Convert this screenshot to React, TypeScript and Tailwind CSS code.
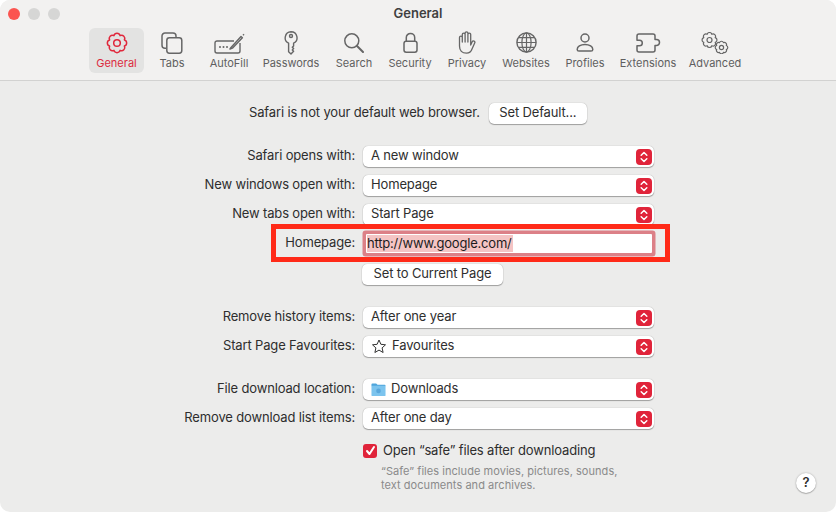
import type { ReactNode } from "react";

// 8 lobed scalloped gear, centred on cx/cy
function gearPath(cx: number, cy: number, r: number) {
  const n = 8;
  let d = "";
  for (let i = 0; i <= n; i++) {
    const a = ((i - 0.5) * 2 * Math.PI) / n - Math.PI / 2;
    const x = (cx + r * Math.cos(a)).toFixed(2);
    const y = (cy + r * Math.sin(a)).toFixed(2);
    d += i === 0 ? `M${x} ${y}` : `A${(r * 0.4).toFixed(2)} ${(r * 0.4).toFixed(2)} 0 0 1 ${x} ${y}`;
  }
  return d + "Z";
}

function GearIcon() {
  return (
    <svg width="22" height="22" viewBox="0 0 22 22" fill="none" stroke="#e0283c" strokeWidth="1.5">
      <path d={gearPath(11, 11, 8)} strokeLinejoin="round" />
      <circle cx="11" cy="11" r="3.300" />
    </svg>
  );
}

function TabsIcon() {
  return (
    <svg width="22" height="22" viewBox="0 0 22 22" fill="none" stroke="#666" strokeWidth="1.5">
      <path d="M5 16.200H4a3 3 0 0 1-3-3V4a3 3 0 0 1 3-3h8a3 3 0 0 1 3 3v1" />
      <rect x="5.800" y="5.800" width="15" height="15.400" rx="2.600" />
    </svg>
  );
}

function AutoFillIcon() {
  return (
    <svg width="31" height="22" viewBox="0 0 31 22" fill="none" stroke="#666" strokeWidth="1.400">
      <path d="M20 9H3a2 2 0 0 0-2 2v8a2 2 0 0 0 2 2h21a2 2 0 0 0 2-2v-8" />
      <path d="M17 15.500 27 4.500l1.400 1.300-10 10.400-2.400.8z" strokeLinejoin="round" />
      <path d="M29 3.200l1-1" />
      <circle cx="6" cy="15" r="1" fill="#666" stroke="none" />
      <circle cx="9.500" cy="15" r="1" fill="#666" stroke="none" />
      <circle cx="13" cy="15" r="1" fill="#666" stroke="none" />
    </svg>
  );
}

function KeyIcon() {
  return (
    <svg width="14" height="24" viewBox="0 0 14 24" fill="none" stroke="#666" strokeWidth="1.400">
      <path
        d="M7 .8a6 6 0 0 1 2.600 11.400V15l-1.300 1.300 1.300 1.300-1.300 1.300 1.300 1.300L7 23l-2.400-2.200V12.200A6 6 0 0 1 7 .8z"
        strokeLinejoin="round"
      />
      <circle cx="7" cy="5" r="1.500" />
    </svg>
  );
}

function SearchIcon() {
  return (
    <svg width="20" height="20" viewBox="0 0 20 20" fill="none" stroke="#666" strokeWidth="1.500">
      <circle cx="7.800" cy="7.800" r="7" />
      <path d="M12.800 12.800 19 19" strokeWidth="2" strokeLinecap="round" />
    </svg>
  );
}

function LockIcon() {
  return (
    <svg width="15" height="21" viewBox="0 0 15 21" fill="none" stroke="#666" strokeWidth="1.500">
      <rect x="1" y="9.200" width="13" height="11" rx="2.200" />
      <path d="M3.300 9V5.600a4.200 4.200 0 0 1 8.400 0V9" />
    </svg>
  );
}

function HandIcon() {
  return (
    <svg width="18" height="23" viewBox="0 0 18 23" fill="none" stroke="#666" strokeWidth="1.300" strokeLinecap="round" strokeLinejoin="round">
      <path d="M4.300 11V3.500a1.400 1.400 0 0 1 2.800 0V11M7.100 11V2.200a1.400 1.400 0 0 1 2.800 0V11M9.900 11V3.500a1.400 1.400 0 0 1 2.800 0V14l1.500-3.300a1.400 1.400 0 0 1 2.500 1.300L14 18c-1 3-3 4.200-5.500 4.200-4.500 0-7-2.700-7-7.200V6.500a1.400 1.400 0 0 1 2.800 0V11" />
    </svg>
  );
}

function GlobeIcon() {
  return (
    <svg width="21" height="21" viewBox="0 0 21 21" fill="none" stroke="#666" strokeWidth="1.200">
      <circle cx="10.500" cy="10.500" r="9.600" strokeWidth="1.400" />
      <ellipse cx="10.500" cy="10.500" rx="4.600" ry="9.600" />
      <path d="M10.500 1v19M1 10.500h19M2.400 5.600h16.200M2.400 15.400h16.200" />
    </svg>
  );
}

function ProfileIcon() {
  return (
    <svg width="18" height="19" viewBox="0 0 18 19" fill="none" stroke="#666" strokeWidth="1.500">
      <circle cx="9" cy="5" r="4" />
      <path d="M9 11.400c-4.600 0-7.800 2.400-7.800 5 0 1 .7 1.600 1.800 1.600h12c1.100 0 1.800-.6 1.800-1.600 0-2.600-3.200-5-7.800-5z" />
    </svg>
  );
}

function PuzzleIcon() {
  return (
    <svg width="25" height="20" viewBox="0 0 25 20" fill="none" stroke="#666" strokeWidth="1.500">
      <path
        d="M3 1h14a2 2 0 0 1 2 2v3.500h1.500a3 3 0 0 1 0 6H19V17a2 2 0 0 1-2 2H3a2 2 0 0 1-2-2v-4.200h2.500a2.800 2.800 0 0 0 0-5.600H1V3a2 2 0 0 1 2-2z"
        strokeLinejoin="round"
      />
    </svg>
  );
}

function AdvancedIcon() {
  return (
    <svg width="28" height="22" viewBox="0 0 28 22" fill="none" stroke="#666" strokeWidth="1.200">
      <path d={gearPath(8.500, 8, 6.200)} strokeLinejoin="round" />
      <circle cx="8.500" cy="8" r="2.500" />
      <path d={gearPath(20.500, 15.500, 5.200)} strokeLinejoin="round" />
      <circle cx="20.500" cy="15.500" r="2.100" />
    </svg>
  );
}

type Tab = { label: string; icon: ReactNode; width: string; active?: boolean };

const tabs: Tab[] = [
  { label: "General", icon: <GearIcon />, width: "w-[55px]", active: true },
  { label: "Tabs", icon: <TabsIcon />, width: "w-[56px]" },
  { label: "AutoFill", icon: <AutoFillIcon />, width: "w-[58px]" },
  { label: "Passwords", icon: <KeyIcon />, width: "w-[66px]" },
  { label: "Search", icon: <SearchIcon />, width: "w-[60px]" },
  { label: "Security", icon: <LockIcon />, width: "w-[52px]" },
  { label: "Privacy", icon: <HandIcon />, width: "w-[62px]" },
  { label: "Websites", icon: <GlobeIcon />, width: "w-[56px]" },
  { label: "Profiles", icon: <ProfileIcon />, width: "w-[62px]" },
  { label: "Extensions", icon: <PuzzleIcon />, width: "w-[64px]" },
  { label: "Advanced", icon: <AdvancedIcon />, width: "w-[70px]" },
];

function Stepper() {
  return (
    <span className="flex h-4 w-4 items-center justify-center rounded-[4px] bg-[#e0243a]">
      <svg width="10" height="12" viewBox="0 0 10 12" fill="none" stroke="#fff" strokeWidth="1.500" strokeLinecap="round" strokeLinejoin="round">
        <path d="M2.200 4.200 5 1.500l2.800 2.700M2.200 7.800 5 10.500l2.800-2.700" />
      </svg>
    </span>
  );
}

function Row({ label, children }: { label?: string; children: ReactNode }) {
  return (
    <div className="flex h-[21px] items-center">
      <span className="w-[355px] whitespace-nowrap pb-[2px] text-right">{label}</span>
      <div className="ml-2 w-[291px]">{children}</div>
    </div>
  );
}

function Select({ value, icon }: { value: string; icon?: ReactNode }) {
  return (
    <div className="flex h-[21px] items-center justify-between rounded-[5px] bg-white pl-2 pr-[2px] shadow-[0_0_1px_rgba(0,0,0,0.35),0_1px_1px_rgba(0,0,0,0.3)]">
      <span className="flex items-center gap-[5px]">
        {icon}
        <span className="pb-[2px]">{value}</span>
      </span>
      <Stepper />
    </div>
  );
}

function Star() {
  return (
    <svg width="16" height="15" viewBox="0 0 15 15" fill="none" stroke="#333" strokeWidth="1" strokeLinejoin="round">
      <path d="M7.500 1l1.900 4.300 4.600.5-3.400 3.100 1 4.600-4.100-2.400-4.100 2.400 1-4.600L1 5.800l4.600-.5z" />
    </svg>
  );
}

function Folder() {
  return (
    <svg width="15" height="15" viewBox="0 0 16 15">
      <path d="M0.500 2a1 1 0 0 1 1-1h4l1.500 1.500h7.500a1 1 0 0 1 1 1V4H.5z" fill="#4fa6dc" />
      <rect x="0.500" y="3.500" width="15" height="11" rx="1" fill="#7cc4ee" />
      <circle cx="8" cy="9" r="2.500" fill="#5aa8dc" />
    </svg>
  );
}

function PushButton({ children, className }: { children: ReactNode; className: string }) {
  return (
    <button
      type="button"
      className={`flex h-[21px] items-center justify-center rounded-[5px] bg-white pb-[2px] shadow-[0_0_1px_rgba(0,0,0,0.35),0_1px_1px_rgba(0,0,0,0.3)] ${className}`}
    >
      {children}
    </button>
  );
}

export default function App() {
  return (
    <div className="h-[512px] w-[836px] overflow-hidden bg-white font-['Inter','Liberation_Sans',sans-serif] text-[13px] tracking-[-0.15px] text-[#2e2e2e]">
      <div className="flex h-full flex-col overflow-hidden rounded-[10px] bg-[#ececeb]">
        <header className="h-[81px] border-b border-[#d2d2d1] bg-[#f2f1f0] tracking-normal">
          <div className="grid h-[28px] grid-cols-3 items-center px-2">
            <div className="flex gap-2">
              <span className="h-3 w-3 rounded-full bg-[#fb5550]" />
              <span className="h-3 w-3 rounded-full bg-[#d6d6d5]" />
              <span className="h-3 w-3 rounded-full bg-[#d6d6d5]" />
            </div>
            <h1 className="text-center text-[13px] font-semibold text-[#404040]">General</h1>
          </div>
          <nav className="flex pl-[89px]">
            {tabs.map((t) => (
              <div
                key={t.label}
                className={`flex h-[45px] flex-col items-center rounded-[6px] ${t.width} ${t.active ? "bg-[#e3e3e2] text-[#dc2a3e]" : "text-[#5f5f5f]"}`}
              >
                <div className="flex h-[28px] items-center justify-center pt-px">{t.icon}</div>
                <span className="whitespace-nowrap text-[11px] leading-[14px]">{t.label}</span>
              </div>
            ))}
          </nav>
        </header>

        <main className="flex flex-1">
          <div className="flex flex-col pt-[22px]">
            <div className="flex h-[21px] items-center pl-[249px]">
              <span className="whitespace-nowrap pb-[2px]">Safari is not your default web browser.</span>
              <PushButton className="ml-[9px] w-[98px]">Set Default...</PushButton>
            </div>

            <div className="mt-[22px] flex flex-col gap-2">
              <Row label="Safari opens with:"><Select value="A new window" /></Row>
              <Row label="New windows open with:"><Select value="Homepage" /></Row>
              <Row label="New tabs open with:"><Select value="Start Page" /></Row>
            </div>

            <div className="relative mt-2">
              <Row label="Homepage:">
                <div className="ml-[3px] flex h-[19px] w-[286px] items-center rounded-[1px] bg-white pl-px shadow-[0_0_0_3.5px_#dc8087]">
                  <span className="flex h-[17px] items-center bg-[#f4c4c4] pb-px pr-px leading-none tracking-[-0.2px] text-[#1c1c1c]">http://www.google.com/</span>
                </div>
              </Row>
              <div className="absolute left-[271px] top-[-9px] h-[38px] w-[399px] border-[5px] border-[#ff2a18]" />
            </div>

            <div className="mt-[10px] pl-[362px]">
              <PushButton className="w-[141px]">Set to Current Page</PushButton>
            </div>

            <div className="mt-[22px] flex flex-col gap-2">
              <Row label="Remove history items:"><Select value="After one year" /></Row>
              <Row label="Start Page Favourites:"><Select value="Favourites" icon={<Star />} /></Row>
            </div>

            <div className="mt-[22px] flex flex-col gap-2">
              <Row label="File download location:"><Select value="Downloads" icon={<Folder />} /></Row>
              <Row label="Remove download list items:"><Select value="After one day" /></Row>
            </div>

            <label className="mt-[14px] flex h-[15px] items-center pl-[363px]">
              <span className="flex h-[14px] w-[14px] items-center justify-center rounded-[3px] bg-[#e0243a]">
                <svg width="11" height="11" viewBox="0 0 11 11" fill="none" stroke="#fff" strokeWidth="2" strokeLinecap="round" strokeLinejoin="round">
                  <path d="M2 6l2.500 3L9 2" />
                </svg>
              </span>
              <span className="ml-[6px] whitespace-nowrap">Open “safe” files after downloading</span>
            </label>

            <p className="mt-[6px] pl-[381px] text-[11px] leading-[14px] tracking-[0.05px] text-[#8a8a8a]">
              “Safe” files include movies, pictures, sounds,
              <br />
              text documents and archives.
            </p>
          </div>

          <button
            type="button"
            className="ml-auto mb-[19px] mr-5 flex h-5 w-5 items-center justify-center self-end rounded-full bg-white text-[13px] font-semibold shadow-[0_0_2px_rgba(0,0,0,0.3),0_1px_1px_rgba(0,0,0,0.2)]"
          >
            ?
          </button>
        </main>
      </div>
    </div>
  );
}
